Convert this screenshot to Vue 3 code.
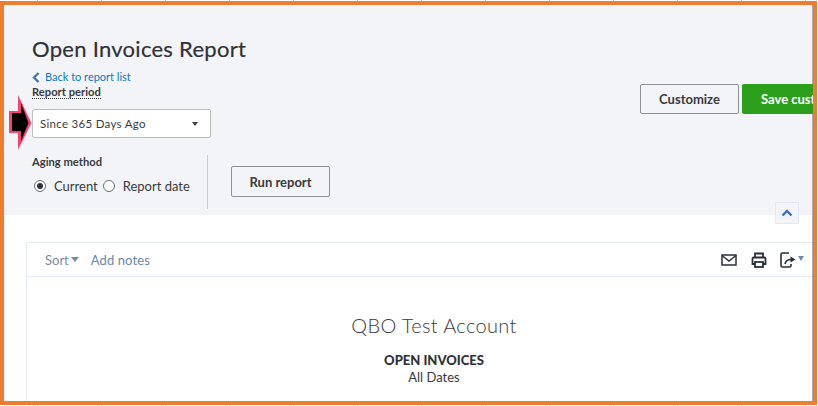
<script setup>
</script>

<template>
  <div class="shot">
    <div class="frame">
      <header class="head">
        <h1 class="title">Open Invoices Report</h1>
        <a class="back">
          <svg class="chev" width="8" height="11" viewBox="0 0 8 11"><path d="M6.5 1 2 5.500 6.500 10" fill="none" stroke="#3d6fb8" stroke-width="2.2" /></svg>
          Back to report list
        </a>
        <div class="controls">
          <div class="left-col">
            <span class="label dotted">Report period</span>
            <div class="select">
              <span>Since 365 Days Ago</span>
              <i class="caret"></i>
              <svg class="marker" width="24" height="56" viewBox="0 0 24 56">
                <path d="M9 0 22.500 28 9 55V38H0V16H9Z" fill="#f5446f" />
                <path d="M3 18H12V8L19.500 28 12 46V36H3Z" fill="#000" />
              </svg>
            </div>
            <div class="aging">
              <div class="aging-fields">
                <span class="label">Aging method</span>
                <div class="radios">
                  <span class="radio on"></span><span class="radio-text">Current</span>
                  <span class="radio"></span><span class="radio-text">Report date</span>
                </div>
              </div>
              <div class="divider"></div>
              <button class="btn run">Run report</button>
            </div>
          </div>
          <div class="actions">
            <button class="btn customize">Customize</button>
            <button class="save">Save customization</button>
          </div>
        </div>
        <button class="collapse">
          <svg width="12" height="8" viewBox="0 0 12 8"><path d="M1.500 6.500 6 2l4.500 4.500" fill="none" stroke="#3f6fb5" stroke-width="2.400" /></svg>
        </button>
      </header>

      <section class="report">
        <div class="toolbar">
          <span class="sort">Sort<i class="tri"></i></span>
          <span class="notes">Add notes</span>
          <div class="icons">
            <svg class="mail" width="16" height="12" viewBox="0 0 16 12"><rect x="1" y="1" width="14" height="10" fill="none" stroke="#2b2f3a" stroke-width="1.500" /><path d="M1 1.500 8 7l7-5.500" fill="none" stroke="#2b2f3a" stroke-width="1.400" /></svg>
            <svg width="16" height="16" viewBox="0 0 16 16"><path d="M4 5V1.500h8V5M4 12H1.500V6.500a1 1 0 0 1 1-1h11a1 1 0 0 1 1 1V12H12" fill="none" stroke="#2b2f3a" stroke-width="1.800" /><rect x="4" y="10" width="8" height="5" fill="none" stroke="#2b2f3a" stroke-width="1.800" /></svg>
            <span class="export">
              <svg width="16" height="16" viewBox="0 0 16 16"><path d="M9 1H2.500a1.500 1.500 0 0 0-1.500 1.500v11A1.500 1.500 0 0 0 2.500 15H9.500a1.500 1.500 0 0 0 1.500-1.500V12" fill="none" stroke="#2b2f3a" stroke-width="1.600" /><path d="M5 12c.5-3 3-4.500 6-4.500" fill="none" stroke="#2b2f3a" stroke-width="1.600" /><path d="M10.500 4.500 15.500 7.500 10.500 10.500Z" fill="#2b2f3a" /></svg>
              <i class="tri small"></i>
            </span>
          </div>
        </div>
        <div class="report-body">
          <h2 class="company">QBO Test Account</h2>
          <div class="report-name">OPEN INVOICES</div>
          <div class="report-range">All Dates</div>
        </div>
      </section>
    </div>
    <div class="ticks top"></div>
    <div class="ticks bottom"></div>
  </div>
</template>

<style>
html, body { margin: 0; background: #fff; }
</style>

<style scoped>
.shot {
  width: 818px;
  height: 406px;
  position: relative;
  overflow: hidden;
  background: #fff;
  font-family: "Lato", "Open Sans", sans-serif;
  color: #393a3d;
}
.frame {
  position: relative;
  box-sizing: border-box;
  width: 817px;
  height: 404px;
  margin-top: 1px;
  border: 4px solid #ed7d31;
  overflow: hidden;
  background: #fff;
}
.frame::after {
  content: "";
  position: absolute;
  top: 0;
  bottom: 0;
  right: 0;
  width: 1px;
  background: #a9abb0;
}
.ticks {
  position: absolute;
  left: 37px;
  right: 0;
  height: 1px;
  background: repeating-linear-gradient(90deg, #c4c4c4 0, #c4c4c4 1px, transparent 1px, transparent 64px);
}
.ticks.top { top: 0; }
.ticks.bottom { bottom: 0; }
.head {
  position: relative;
  height: 210px;
  background: #f3f4f8;
  box-sizing: border-box;
  padding: 31px 0 0 28px;
}
.title {
  margin: 0;
  font-size: 22px;
  line-height: 25px;
  font-weight: 400;
  letter-spacing: 0.28px;
  color: #2f3136;
  -webkit-text-stroke: 0.2px #2f3136;
}
.back {
  display: flex;
  align-items: center;
  gap: 5px;
  margin-top: 9px;
  font-size: 11px;
  line-height: 14px;
  color: #0b78c8;
}
.controls { display: flex; margin-top: 2px; }
.left-col { width: 608px; flex: none; }
.label {
  display: block;
  width: max-content;
  font-size: 11.2px;
  line-height: 14px;
  font-weight: 700;
  color: #393a3d;
}
.dotted { border-bottom: 1px dotted #393a3d; line-height: 12px; }
.select {
  position: relative;
  box-sizing: border-box;
  width: 179px;
  height: 29px;
  margin-top: 10px;
  border: 1px solid #babec5;
  border-radius: 2px;
  background: #fff;
  display: flex;
  align-items: center;
  justify-content: space-between;
  padding: 0 12px 0 7px;
  font-size: 11.5px;
  letter-spacing: 0.3px;
}
.caret {
  width: 0; height: 0;
  border-left: 3px solid transparent;
  border-right: 3px solid transparent;
  border-top: 4px solid #393a3d;
}
.marker {
  position: absolute;
  left: -24px;
  top: -15px;
}
.aging { display: flex; margin-top: 17px; height: 54px; }
.aging-fields { width: 175px; }
.radios {
  display: flex;
  align-items: center;
  margin-top: 9px;
  margin-left: 2px;
  font-size: 13px;
}
.radio {
  box-sizing: border-box;
  width: 12px; height: 12px;
  border-radius: 50%;
  border: 1px solid #6b6c72;
  background: #fff;
  position: relative;
  flex: none;
}
.radio.on::after {
  content: "";
  position: absolute;
  left: 2px; top: 2px;
  width: 6px; height: 6px;
  border-radius: 50%;
  background: #2f3136;
}
.radio-text { margin: 0 5px 0 8px; white-space: nowrap; }
.divider { width: 1px; height: 54px; background: #c9cbd0; flex: none; }
.btn {
  box-sizing: border-box;
  border: 1px solid #8d9096;
  border-radius: 2px;
  background: transparent;
  font: 700 13px "Lato", sans-serif;
  color: #393a3d;
  padding: 0;
}
.run { width: 99px; height: 31px; margin: 11px 0 0 23px; }
.actions { display: flex; gap: 3px; margin-top: -2px; flex: none; }
.customize { width: 99px; height: 30px; flex: none; }
.save {
  position: relative;
  z-index: 1;
  flex: none;
  width: 150px; height: 30px;
  border: 0; border-radius: 2px;
  background: #2ca01c;
  color: #fff;
  font: 700 13px "Lato", sans-serif;
  padding: 0 0 0 19px;
  text-align: left;
  white-space: nowrap;
}
.collapse {
  position: absolute;
  left: 771px;
  top: 197px;
  z-index: 1;
  box-sizing: border-box;
  width: 24px; height: 22px;
  background: #f3f4f8;
  border: 1px solid #e3e7f1;
  padding: 0;
  display: flex;
  align-items: center;
  justify-content: center;
}
.report {
  box-sizing: border-box;
  margin: 27px 0 0 22px;
  width: 787px;
  height: 170px;
  border-left: 1px solid #e3e8f3;
  border-top: 1px solid #e3e8f3;
  background: #fff;
}
.toolbar {
  display: flex;
  align-items: center;
  height: 33px;
  border-bottom: 1px solid #e3e8f3;
  padding: 0 9px 0 18px;
  font-size: 13px;
  color: #7b8ba5;
}
.sort { display: flex; align-items: center; gap: 2px; }
.tri {
  display: inline-block;
  width: 0; height: 0;
  border-left: 4px solid transparent;
  border-right: 4px solid transparent;
  border-top: 5px solid #6f8bad;
}
.tri.small { border-left-width: 3.5px; border-right-width: 3.5px; margin-top: 4px; }
.notes { margin-left: 12px; color: #6d86ac; letter-spacing: 0.1px; }
.icons { margin-left: auto; display: flex; align-items: center; gap: 13px; }
.mail { margin-right: 1px; }
.export { display: flex; align-items: flex-start; gap: 2px; }
.report-body { text-align: center; padding-left: 28px; }
.company {
  margin: 36px 0 0;
  font-size: 20px;
  line-height: 24px;
  font-weight: 300;
  letter-spacing: 0.35px;
  color: #393a3d;
}
.report-name { margin-top: 16px; font-size: 13px; line-height: 14px; font-weight: 900; color: #2f3136; }
.report-range { margin-top: 2px; font-size: 13px; line-height: 16px; }
</style>
